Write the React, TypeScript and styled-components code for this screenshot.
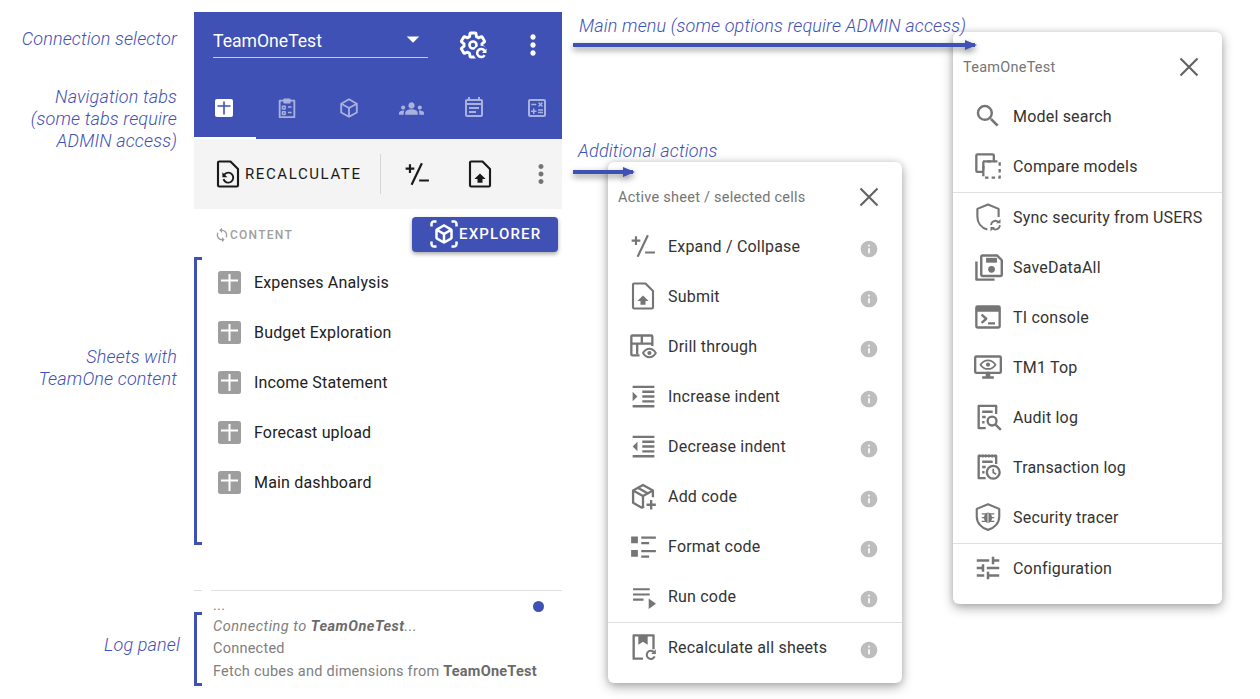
import React from 'react'
import styled, { createGlobalStyle } from 'styled-components'
import {
  MdArrowDropDown,
  MdFormatIndentDecrease,
  MdFormatIndentIncrease,
  MdGroups,
  MdInfo,
  MdMoreVert,
  MdOutlineCalculate,
  MdOutlineEventNote,
  MdOutlineTune,
  MdOutlineViewInAr,
  MdSearch,
  MdSync,
} from 'react-icons/md'

const BLUE = '#3f51b5'
const GREY = '#757575'

const GlobalStyle = createGlobalStyle`
  html, body {
    margin: 0;
    padding: 0;
    background: #fff;
    overflow: hidden;
  }
  body {
    font-family: Roboto, "Liberation Sans", sans-serif;
  }
`

const Stage = styled.div`
  position: relative;
  display: flex;
  align-items: flex-start;
  width: 1260px;
  height: 699px;
  box-sizing: border-box;
  padding-top: 12px;
  overflow: hidden;
`

const LabelColumn = styled.div`
  width: 177px;
  margin-right: 17px;
  flex: none;
  display: flex;
  flex-direction: column;
  align-items: flex-end;
`

const SideLabel = styled.div<{ $top: number; $shift?: number }>`
  margin-top: ${p => p.$top}px;
  margin-right: ${p => p.$shift ?? 0}px;
  text-align: right;
  font-size: 18px;
  line-height: 22px;
  font-style: italic;
  font-weight: 300;
  letter-spacing: 0.14px;
  color: ${BLUE};
  white-space: nowrap;
`

const Note = styled(SideLabel)<{ $x: number; $y: number }>`
  position: absolute;
  margin: 0;
  left: ${p => p.$x}px;
  top: ${p => p.$y}px;
  text-align: left;
`

const SidePanel = styled.div`
  width: 368px;
  height: 687px;
  flex: none;
  display: flex;
  flex-direction: column;
`

const Header = styled.div`
  height: 127px;
  background: ${BLUE};
  color: #fff;
  overflow: hidden;
`

const ConnectionRow = styled.div`
  height: 46px;
  display: flex;
  padding-left: 19px;
`

const Selector = styled.div`
  width: 215px;
  height: 46px;
  box-sizing: border-box;
  border-bottom: 1px solid #c5cae9;
  display: flex;
  align-items: center;
  justify-content: space-between;
  padding: 13px 0 0;
  font-size: 17.6px;
  svg {
    margin-top: -5px;
  }
`

const HeaderAction = styled.div<{ $left: number }>`
  margin-left: ${p => p.$left}px;
  height: 46px;
  padding-top: 20px;
  box-sizing: border-box;
  display: flex;
  align-items: center;
`

const Tabs = styled.div`
  margin: 21px 0 0 -1px;
  display: flex;
  width: 375px;
`

const Tab = styled.div<{ $active?: boolean }>`
  width: 62.5px;
  height: 60px;
  flex: none;
  box-sizing: border-box;
  display: flex;
  align-items: center;
  justify-content: center;
  color: ${p => (p.$active ? '#fff' : '#a9b2de')};
  border-bottom: 2px solid ${p => (p.$active ? '#fff' : 'transparent')};
`

const Toolbar = styled.div`
  height: 70px;
  background: #f4f4f4;
  display: flex;
  align-items: center;
  padding-right: 6px;
  color: #1a1a1a;
`

const RecalcButton = styled.div`
  width: 186px;
  flex: none;
  box-sizing: border-box;
  padding-left: 19px;
  display: flex;
  align-items: center;
  gap: 2px;
  font-size: 15px;
  font-weight: 400;
  letter-spacing: 1.6px;
`

const ToolDivider = styled.div`
  width: 1px;
  height: 40px;
  flex: none;
  background: #d6d6d6;
`

const ToolSlot = styled.div<{ $width?: number }>`
  flex: ${p => (p.$width ? `0 0 ${p.$width}px` : '1')};
  display: flex;
  justify-content: ${p => (p.$width ? 'center' : 'flex-end')};
  align-items: center;
`

const ContentBar = styled.div`
  height: 48px;
  display: flex;
  align-items: center;
  justify-content: space-between;
  padding: 0 4px 0 20px;
`

const ContentLabel = styled.div`
  display: flex;
  align-items: center;
  margin-top: 3px;
  font-size: 12px;
  font-weight: 500;
  letter-spacing: 1.25px;
  color: #9e9e9e;
`

const ExplorerButton = styled.div`
  width: 146px;
  height: 35px;
  margin-top: 2px;
  box-sizing: border-box;
  padding-left: 17px;
  background: ${BLUE};
  border-radius: 4px;
  box-shadow: 0 2px 4px rgba(0, 0, 0, 0.35);
  color: #fff;
  display: flex;
  align-items: center;
  gap: 0;
  font-size: 15px;
  font-weight: 500;
  letter-spacing: 1.2px;
`

const SheetList = styled.div`
  display: flex;
  flex-direction: column;
`

const SheetRow = styled.div`
  height: 50px;
  display: flex;
  align-items: center;
  padding-left: 24px;
  gap: 13px;
  font-size: 16px;
  letter-spacing: 0.17px;
  color: #212121;
`

const LogPanel = styled.div`
  margin-top: auto;
  height: 109px;
  position: relative;
  font-size: 14.5px;
  color: #808080;
`

const LogRule = styled.div`
  display: flex;
  gap: 9px;
`

const LogRulePiece = styled.div<{ $short?: boolean }>`
  height: 1px;
  background: #e0e0e0;
  flex: ${p => (p.$short ? '0 0 8px' : '1')};
`

const LogLines = styled.div`
  padding: 5px 0 0 19px;
  display: flex;
  flex-direction: column;
`

const LogLine = styled.div<{ $italic?: boolean; $tight?: boolean }>`
  height: ${p => (p.$tight ? 19.5 : 22.5)}px;
  line-height: ${p => (p.$tight ? 19.5 : 22.5)}px;
  font-weight: 400;
  font-style: ${p => (p.$italic ? 'italic' : 'normal')};
  letter-spacing: ${p => (p.$italic ? 0.5 : 0.24)}px;
  white-space: nowrap;
  b {
    font-weight: 700;
    color: #6b6b6b;
  }
`

const LogDot = styled.div`
  position: absolute;
  right: 18px;
  top: 11px;
  width: 11px;
  height: 11px;
  border-radius: 50%;
  background: ${BLUE};
`

const Popup = styled.div<{ $width: number; $top: number; $left: number }>`
  width: ${p => p.$width}px;
  margin-top: ${p => p.$top}px;
  margin-left: ${p => p.$left}px;
  flex: none;
  padding-bottom: 11px;
  background: #fff;
  border-radius: 6px;
  box-shadow: 0 4px 12px rgba(0, 0, 0, 0.32), 0 0 6px rgba(0, 0, 0, 0.12);
`

const PopupHeader = styled.div`
  height: 59px;
  box-sizing: border-box;
  padding: 11px 23px 0 10px;
  display: flex;
  align-items: center;
  justify-content: space-between;
  font-size: 14.5px;
  letter-spacing: 0.25px;
  color: ${GREY};
`

const CloseMark = styled.svg`
  color: #616161;
  width: 20px;
  height: 20px;
`

const MenuRow = styled.div`
  height: 50px;
  display: flex;
  align-items: center;
  font-size: 16px;
  letter-spacing: 0.2px;
  color: #333;
`

const MenuIcon = styled.div`
  width: 60px;
  flex: none;
  display: flex;
  justify-content: center;
  color: ${GREY};
  padding-left: 10px;
  box-sizing: border-box;
`

const MenuText = styled.div`
  flex: 1;
  white-space: nowrap;
`

const InfoMark = styled.div`
  width: 20px;
  margin-right: 23px;
  margin-top: 6px;
  display: flex;
  color: #bdbdbd;
`

const MenuDivider = styled.div`
  height: 1px;
  margin: 1px 0 -1px;
  background: #e0e0e0;
`

const Bracket = styled.div<{ $top: number; $height: number }>`
  position: absolute;
  left: 194px;
  top: ${p => p.$top}px;
  width: 5px;
  height: ${p => p.$height}px;
  border: 3px solid ${BLUE};
  border-right: none;
`

const Arrow = styled.div<{ $x: number; $y: number; $width: number }>`
  position: absolute;
  left: ${p => p.$x}px;
  top: ${p => p.$y}px;
  width: ${p => p.$width}px;
  height: 4px;
  background: ${BLUE};
  filter: drop-shadow(0 3px 3px rgba(0, 0, 0, 0.45));
  &::after {
    content: '';
    position: absolute;
    right: -2px;
    top: -3.5px;
    border-left: 12px solid ${BLUE};
    border-top: 5.5px solid transparent;
    border-bottom: 5.5px solid transparent;
  }
`

type IconProps = { size?: number; children: React.ReactNode }

const Line = ({ size = 28, children }: IconProps) => (
  <svg
    width={size}
    height={size}
    viewBox="0 0 24 24"
    fill="none"
    stroke="currentColor"
    strokeWidth={2}
    strokeLinejoin="round"
  >
    {children}
  </svg>
)

const CloseIcon = () => (
  <CloseMark viewBox="0 0 20 20" fill="none" stroke="currentColor" strokeWidth={2.1}>
    <path d="M1.500 1.500l17 17M18.500 1.500l-17 17" />
  </CloseMark>
)

const SheetIcon = ({ color = '#9e9e9e', mark = '#fff', size = 23 }) => (
  <svg width={size} height={size} viewBox="0 0 23 23">
    <rect width="23" height="23" rx="2.500" fill={color} />
    <path d="M3 9.500h17M11.500 3v17" stroke={mark} strokeWidth="2" fill="none" />
  </svg>
)

const ActiveTabIcon = () => (
  <svg width="18" height="18" viewBox="0 0 18 18">
    <rect width="18" height="18" rx="2" fill="#fff" />
    <path d="M2.500 7h13M9 2.500v13" stroke={BLUE} strokeWidth="1.600" fill="none" />
  </svg>
)

const ClipboardIcon = () => (
  <Line size={22}>
    <path d="M4 4h16v18H4zM9 2.500h6V6H9z" />
    <path d="M7 10h3v3H7zM7 16h3v3H7zM13 11h4M13 17h4" strokeWidth={1.600} />
  </Line>
)

const CubeIcon = ({ size = 22 }: { size?: number }) => (
  <Line size={size}>
    <path d="M12 2.500l8.500 4.800v9.600L12 21.600l-8.500-4.700V7.300z" />
    <path d="M3.500 7.300L12 12l8.500-4.700M12 12v9.600" />
  </Line>
)

const GearRefreshIcon = () => (
  <svg width="30" height="30" viewBox="0 0 24 24" fill="#fff">
    <path
      fill="none"
      stroke="#fff"
      strokeWidth="2.300"
      strokeLinejoin="round"
      d="M19.140 12.940c.04-.3.06-.61.06-.94 0-.32-.02-.64-.07-.94l2.030-1.580c.18-.14.23-.41.12-.61l-1.920-3.320c-.12-.22-.37-.29-.59-.22l-2.390.96c-.5-.38-1.030-.7-1.620-.94l-.36-2.540c-.04-.24-.24-.41-.48-.41h-3.840c-.24 0-.43.17-.47.41l-.36 2.540c-.59.24-1.130.57-1.620.94l-2.390-.96c-.22-.08-.47 0-.59.22L2.740 8.870c-.12.21-.08.47.12.61l2.030 1.580c-.05.3-.09.63-.09.94s.02.64.07.94l-2.030 1.580c-.18.14-.23.41-.12.61l1.920 3.320c.12.22.37.29.59.22l2.390-.96c.5.38 1.030.7 1.620.94l.36 2.540c.05.24.24.41.48.41h3.840c.24 0 .44-.17.47-.41l.36-2.540c.59-.24 1.130-.56 1.620-.94l2.390.96c.22.08.47 0 .59-.22l1.920-3.320c.12-.22.07-.47-.12-.61l-2.010-1.580z"
    />
    <circle cx="12" cy="12" r="2.800" fill="none" stroke="#fff" strokeWidth="2.100" />
    <circle cx="18.500" cy="18.500" r="6" fill={BLUE} />
    <path d="M21.300 20a3.200 3.200 0 1 1 0-3.200" fill="none" stroke="#fff" strokeWidth="2" />
    <path d="M22.800 14.800v3.600h-3.600z" />
  </svg>
)

const PlusMinusIcon = ({ size = 26 }: { size?: number }) => (
  <Line size={size}>
    <path d="M1.500 7h8M5.500 3v8M16.500 2L7 22M14 18h9" />
  </Line>
)

const FileShape = 'M4 3a1 1 0 0 1 1-1h9l6 6v13a1 1 0 0 1-1 1H5a1 1 0 0 1-1-1z'

const SubmitIcon = ({ size = 30 }: { size?: number }) => (
  <Line size={size}>
    <path d={FileShape} strokeWidth={1.700} />
    <path d="M12 11.500l4.500 4.500H14v3h-4v-3H7.500z" fill="currentColor" stroke="none" />
  </Line>
)

const RecalcIcon = () => (
  <Line size={30}>
    <path d={FileShape} strokeWidth={1.700} />
    <path d="M9 12.500a4 4 0 1 1-.6 3.600" strokeWidth={1.500} />
    <path d="M7.500 10.500v4h4z" fill="currentColor" stroke="none" />
  </Line>
)

const DrillIcon = () => (
  <Line>
    <path d="M9 20H3a1 1 0 0 1-1-1V4a1 1 0 0 1 1-1h16a1 1 0 0 1 1 1v8" />
    <path d="M2 10h18M11 3v7M7 10v9" />
    <path d="M12 18c1.500-2.400 3.300-3.600 5.500-3.600S21.500 15.600 23 18c-1.500 2.400-3.300 3.600-5.500 3.600S13.500 20.400 12 18z" fill="#fff" strokeWidth={1.700} />
    <circle cx="17.500" cy="18" r="1.800" fill="currentColor" stroke="none" />
  </Line>
)

const AddCodeIcon = () => (
  <Line>
    <path d="M13 21l-2 1-7.500-4.200V7.200L12 2.500l8.500 4.700V13" />
    <path d="M3.500 7.200L12 12l8.500-4.800M12 12v9M7.500 5l8.500 4.700" />
    <path d="M19 15.500v8M15 19.500h8" />
  </Line>
)

const FormatCodeIcon = () => (
  <Line size={27}>
    <path d="M1 3h6v6H1zM1 15h6v6H1z" fill="currentColor" stroke="none" />
    <path d="M10 4h13M10 9h7M10 16h13M10 21h7" />
  </Line>
)

const RunCodeIcon = () => (
  <Line size={25}>
    <path d="M2 5h16M2 10h16M2 15h10" />
    <path d="M17 14l7 5-7 5z" fill="currentColor" stroke="none" />
  </Line>
)

const RecalcAllIcon = () => (
  <Line>
    <path d="M12 22H4V2h17v12" />
    <path d="M8 2h8v8l-4-2.500L8 10z" fill="currentColor" stroke="none" />
    <path d="M22 20a3.500 3.500 0 1 1-.8-3.700" strokeWidth={1.700} />
    <path d="M23 14v4h-4z" fill="currentColor" stroke="none" />
  </Line>
)

const CompareIcon = () => (
  <Line>
    <path d="M8 17H3a1 1 0 0 1-1-1V3a1 1 0 0 1 1-1h13a1 1 0 0 1 1 1v5H9a1 1 0 0 0-1 1z" />
    <path d="M8 12v10h14V8H8" strokeDasharray="3 2.700" />
  </Line>
)

const ShieldSyncIcon = () => (
  <Line size={30}>
    <path d="M11.500 22C6.500 20.700 3.500 16.500 3.500 11.500V5.500L12 2l8.500 3.500V12" strokeWidth={1.700} />
    <path d="M14.500 18.500a3.500 3.500 0 0 1 6-2.400M21.500 18.500a3.500 3.500 0 0 1-6 2.400" strokeWidth={1.400} />
    <path d="M22 13.500V17h-3.500zM14 23.500V20h3.500z" fill="currentColor" stroke="none" />
  </Line>
)

const SaveAllIcon = () => (
  <Line size={29}>
    <path d="M2 7v15h15" />
    <path d="M6 3a1 1 0 0 1 1-1h12l4 4v12a1 1 0 0 1-1 1H7a1 1 0 0 1-1-1z" />
    <path d="M10 4h9v4h-9z" fill="currentColor" stroke="none" />
    <circle cx="14.500" cy="13.500" r="2.800" fill="currentColor" stroke="none" />
  </Line>
)

const ConsoleIcon = () => (
  <Line>
    <path d="M3 3h18a1 1 0 0 1 1 1v16a1 1 0 0 1-1 1H3a1 1 0 0 1-1-1V4a1 1 0 0 1 1-1z" />
    <path d="M2 5.500h20" strokeWidth={4} />
    <path d="M6.500 10l4 3.500-4 3.500M12 17.500h6" />
  </Line>
)

const MonitorEyeIcon = () => (
  <Line>
    <path d="M2 3h20a1 1 0 0 1 1 1v12a1 1 0 0 1-1 1H2a1 1 0 0 1-1-1V4a1 1 0 0 1 1-1z" />
    <path d="M11 17h2v3h-2zM7 21h10" />
    <path d="M5.500 10c1.700-2.500 3.800-3.700 6.500-3.700s4.800 1.200 6.500 3.700c-1.700 2.500-3.800 3.700-6.500 3.700S7.200 12.500 5.500 10z" strokeWidth={1.500} />
    <circle cx="12" cy="10" r="1.800" fill="currentColor" stroke="none" />
  </Line>
)

const AuditIcon = () => (
  <Line>
    <path d="M10 21.500H4V2.500h15v7" />
    <path d="M7 7.500h9M7 12h3M7 16.500h2" />
    <circle cx="15.500" cy="15.500" r="3.800" />
    <path d="M18.500 18.500l4.500 4.500" />
  </Line>
)

const TransactionIcon = () => (
  <Line>
    <path d="M10 21.500H4V2.500h15v7" />
    <path d="M4 2.500h15" strokeWidth={2.500} strokeDasharray="1.500 1.200" />
    <path d="M7 7.500h9M7 12h3M7 16.500h2" />
    <circle cx="16.500" cy="16.500" r="5.500" />
    <path d="M16.500 13.500v3.200l2.500 1.500" strokeWidth={1.500} />
  </Line>
)

const ShieldBugIcon = () => (
  <Line size={30}>
    <path d="M12 1.800l9 3.700v6c0 5.200-3.700 9.400-9 10.800-5.300-1.400-9-5.600-9-10.800v-6z" strokeWidth={1.700} />
    <ellipse cx="12" cy="12.500" rx="3.200" ry="4.200" fill="currentColor" stroke="none" />
    <path d="M7 9.500h10M7 12.500h10M7 15.500h10" strokeWidth={1.100} />
    <path d="M12 9v7.500" stroke="#fff" strokeWidth={0.700} />
  </Line>
)

type MenuItem = { label: string; icon: React.ReactNode }

const actionRows: MenuItem[] = [
  { label: 'Expand / Collpase', icon: <PlusMinusIcon /> },
  { label: 'Submit', icon: <SubmitIcon /> },
  { label: 'Drill through', icon: <DrillIcon /> },
  { label: 'Increase indent', icon: <MdFormatIndentIncrease size={29} /> },
  { label: 'Decrease indent', icon: <MdFormatIndentDecrease size={29} /> },
  { label: 'Add code', icon: <AddCodeIcon /> },
  { label: 'Format code', icon: <FormatCodeIcon /> },
  { label: 'Run code', icon: <RunCodeIcon /> },
]

const modelRows: MenuItem[] = [
  { label: 'Model search', icon: <MdSearch size={30} /> },
  { label: 'Compare models', icon: <CompareIcon /> },
]

const toolRows: MenuItem[] = [
  { label: 'Sync security from USERS', icon: <ShieldSyncIcon /> },
  { label: 'SaveDataAll', icon: <SaveAllIcon /> },
  { label: 'TI console', icon: <ConsoleIcon /> },
  { label: 'TM1 Top', icon: <MonitorEyeIcon /> },
  { label: 'Audit log', icon: <AuditIcon /> },
  { label: 'Transaction log', icon: <TransactionIcon /> },
  { label: 'Security tracer', icon: <ShieldBugIcon /> },
]

const sheets = ['Expenses Analysis', 'Budget Exploration', 'Income Statement', 'Forecast upload', 'Main dashboard']

const Row = ({ item, info }: { item: MenuItem; info?: boolean }) => (
  <MenuRow>
    <MenuIcon>{item.icon}</MenuIcon>
    <MenuText>{item.label}</MenuText>
    {info && (
      <InfoMark>
        <MdInfo size={20} />
      </InfoMark>
    )}
  </MenuRow>
)

const App = () => (
  <>
    <GlobalStyle />
    <Stage>
      <LabelColumn>
        <SideLabel $top={16}>Connection selector</SideLabel>
        <SideLabel $top={36}>
          Navigation tabs
          <br />
          (some tabs require
          <br />
          ADMIN access)
        </SideLabel>
        <SideLabel $top={194}>
          Sheets with
          <br />
          TeamOne content
        </SideLabel>
        <SideLabel $top={244} $shift={-3}>
          Log panel
        </SideLabel>
      </LabelColumn>

      <SidePanel>
        <Header>
          <ConnectionRow>
            <Selector>
              TeamOneTest
              <MdArrowDropDown size={30} />
            </Selector>
            <HeaderAction $left={30}>
              <GearRefreshIcon />
            </HeaderAction>
            <HeaderAction $left={29}>
              <MdMoreVert size={32} />
            </HeaderAction>
          </ConnectionRow>
          <Tabs>
            <Tab $active>
              <ActiveTabIcon />
            </Tab>
            <Tab>
              <ClipboardIcon />
            </Tab>
            <Tab>
              <CubeIcon />
            </Tab>
            <Tab>
              <MdGroups size={25} />
            </Tab>
            <Tab>
              <MdOutlineEventNote size={24} />
            </Tab>
            <Tab>
              <MdOutlineCalculate size={24} />
            </Tab>
          </Tabs>
        </Header>

        <Toolbar>
          <RecalcButton>
            <RecalcIcon />
            RECALCULATE
          </RecalcButton>
          <ToolDivider />
          <ToolSlot $width={72}>
            <PlusMinusIcon />
          </ToolSlot>
          <ToolSlot $width={54}>
            <SubmitIcon />
          </ToolSlot>
          <ToolSlot>
            <MdMoreVert size={30} color={GREY} />
          </ToolSlot>
        </Toolbar>

        <ContentBar>
          <ContentLabel>
            <MdSync size={16} />
            CONTENT
          </ContentLabel>
          <ExplorerButton>
            <MdOutlineViewInAr size={30} />
            EXPLORER
          </ExplorerButton>
        </ContentBar>

        <SheetList>
          {sheets.map(name => (
            <SheetRow key={name}>
              <SheetIcon />
              {name}
            </SheetRow>
          ))}
        </SheetList>

        <LogPanel>
          <LogRule>
            <LogRulePiece $short />
            <LogRulePiece />
          </LogRule>
          <LogLines>
            <LogLine $tight>...</LogLine>
            <LogLine $italic>
              Connecting to <b>TeamOneTest</b>...
            </LogLine>
            <LogLine>Connected</LogLine>
            <LogLine>
              Fetch cubes and dimensions from <b>TeamOneTest</b>
            </LogLine>
          </LogLines>
          <LogDot />
        </LogPanel>
      </SidePanel>

      <Popup $width={294} $top={150} $left={46}>
        <PopupHeader>
          Active sheet / selected cells
          <CloseIcon />
        </PopupHeader>
        {actionRows.map(item => (
          <Row key={item.label} item={item} info />
        ))}
        <MenuDivider />
        <Row item={{ label: 'Recalculate all sheets', icon: <RecalcAllIcon /> }} info />
      </Popup>

      <Popup $width={269} $top={20} $left={51}>
        <PopupHeader>
          TeamOneTest
          <CloseIcon />
        </PopupHeader>
        {modelRows.map(item => (
          <Row key={item.label} item={item} />
        ))}
        <MenuDivider />
        {toolRows.map(item => (
          <Row key={item.label} item={item} />
        ))}
        <MenuDivider />
        <Row item={{ label: 'Configuration', icon: <MdOutlineTune size={30} /> }} />
      </Popup>

      <Note $x={579} $y={15}>
        Main menu (some options require ADMIN access)
      </Note>
      <Note $x={578} $y={140}>
        Additional actions
      </Note>
      <Arrow $x={573} $y={43} $width={402} />
      <Arrow $x={573} $y={170} $width={60} />
      <Bracket $top={257} $height={282} />
      <Bracket $top={612} $height={68} />
    </Stage>
  </>
)

export default App
